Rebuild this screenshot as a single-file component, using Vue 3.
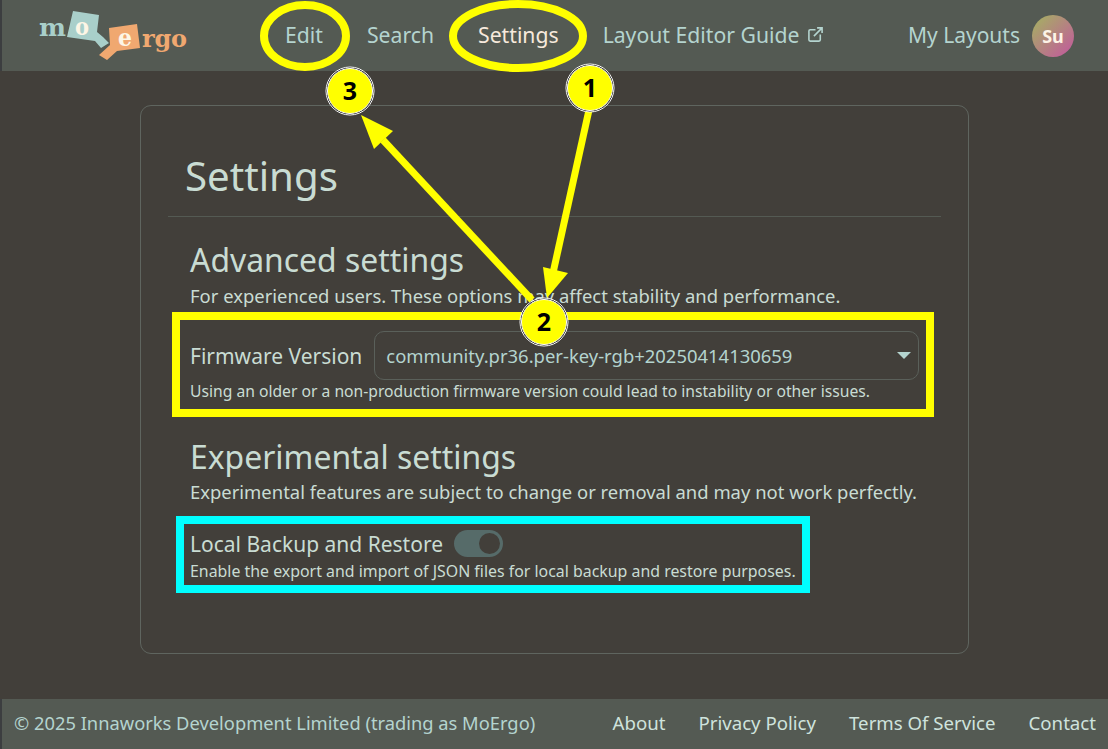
<template>
  <div class="page">
    <header class="topbar">
      <svg class="logo" width="165" height="60" viewBox="0 0 165 60">
        <path fill="#a9cfca" d="M43 6 L69 10 L67 27 L73 32 L79 38 L71 43 L65 36 L37 32 Z" />
        <path fill="#f0a870" d="M79 23 L107 19 L110 43 L87 46 L77 55 L69 50 L80 40 Z" />
        <text class="lt" x="9" y="31" fill="#a9cfca" font-size="24" textLength="27" lengthAdjust="spacingAndGlyphs">m</text>
        <text class="lt" x="45" y="30" fill="#fdf6e6" font-size="24" textLength="14" lengthAdjust="spacingAndGlyphs">o</text>
        <text class="lt" x="88" y="41" fill="#fdf6e6" font-size="24" textLength="14" lengthAdjust="spacingAndGlyphs">e</text>
        <text class="lt" x="112" y="42" fill="#f0a870" font-size="24" textLength="45" lengthAdjust="spacing">rgo</text>
      </svg>
      <nav class="nav">
        <a class="link">Edit</a>
        <a class="link">Search</a>
        <a class="link active">Settings</a>
        <a class="link guide">Layout Editor Guide
          <svg width="17" height="17" viewBox="0 0 16 16" fill="none" stroke="currentColor" stroke-width="1.5">
            <path d="M8 3.500H3A1.200 1.200 0 0 0 1.800 4.700V13A1.200 1.200 0 0 0 3 14.200H11.300A1.200 1.200 0 0 0 12.500 13V8" />
            <path d="M6.500 9.500L14.200 1.800M9.500 1.800H14.200V6.500" />
          </svg>
        </a>
      </nav>
      <div class="user">
        <span class="link mine">My Layouts</span>
        <span class="avatar">Su</span>
      </div>
    </header>

    <main class="main">
      <section class="card">
        <h1 class="title">Settings</h1>
        <div class="body">
          <h2 class="heading">Advanced settings</h2>
          <p class="lead">For experienced users. These options may affect stability and performance.</p>
          <div class="field firmware">
            <div class="row">
              <label class="label">Firmware Version</label>
              <div class="select">
                <span>community.pr36.per-key-rgb+20250414130659</span>
                <i class="caret"></i>
              </div>
            </div>
            <p class="hint">Using an older or a non-production firmware version could lead to instability or other issues.</p>
          </div>
          <h2 class="heading second">Experimental settings</h2>
          <p class="lead">Experimental features are subject to change or removal and may not work perfectly.</p>
          <div class="field backup">
            <div class="row tight">
              <label class="label small">Local Backup and Restore</label>
              <span class="toggle"><i class="knob"></i></span>
            </div>
            <p class="hint low">Enable the export and import of JSON files for local backup and restore purposes.</p>
          </div>
        </div>
      </section>
    </main>

    <footer class="footer">
      <span class="copy">© 2025 Innaworks Development Limited (trading as MoErgo)</span>
      <div class="flinks">
        <a>About</a><a>Privacy Policy</a><a>Terms Of Service</a><a>Contact</a>
      </div>
    </footer>

    <svg class="marks" width="1108" height="749" viewBox="0 0 1108 749">
      <ellipse cx="305" cy="36" rx="41" ry="31" class="ring" />
      <ellipse cx="518" cy="36" rx="65" ry="32" class="ring" />
      <rect x="176" y="316" width="754" height="97" class="box y" />
      <rect x="180" y="520" width="626" height="69" class="box c" />
      <path d="M589 110 L553 273" class="ar" />
      <path d="M532 300 L383 140" class="ar" />
      <path d="M547 298 L543 267 L568 273 Z" class="head" />
      <path d="M361 115 L393 131 L374 149 Z" class="head" />
      <g v-for="b in badges" :key="b.n">
        <circle :cx="b.x" :cy="b.y" r="24" class="b1" />
        <circle :cx="b.x" :cy="b.y" r="22.500" class="b2" />
        <text :x="b.x" :y="b.y + 9" class="num">{{ b.n }}</text>
      </g>
    </svg>
  </div>
</template>

<script setup>
const badges = [
  { n: 1, x: 590, y: 88 },
  { n: 2, x: 544, y: 322 },
  { n: 3, x: 350, y: 91 },
]
</script>

<style>
html, body { margin: 0; background: #423f3a; }
</style>

<style scoped>
.page {
  position: relative;
  width: 1108px;
  height: 749px;
  overflow: hidden;
  display: flex;
  flex-direction: column;
  background: #423f3a;
  color: #c9dcd3;
  font-family: "Noto Sans", "Open Sans", sans-serif;
}
.topbar {
  height: 71px;
  flex: none;
  display: flex;
  align-items: center;
  background: #545a53;
  border-left: 2px solid #3c3e40;
  box-sizing: border-box;
  padding-left: 28px;
}
.logo { flex: none; margin-top: -1px; }
.lt { font-family: "DejaVu Serif", serif; font-weight: 700; }
.nav {
  display: flex;
  gap: 44px;
  margin-left: 90px;
  margin-top: -2px;
  align-items: center;
}
.link {
  color: #b4d4cf;
  font-size: 21.200px;
  white-space: nowrap;
}
.mine { font-size: 21px; margin-top: -2px; }
.active { color: #f7e9dc; }
.guide { display: flex; align-items: center; gap: 8px; }
.user {
  display: flex;
  align-items: center;
  gap: 12px;
  margin-left: auto;
  margin-right: 34px;
}
.avatar {
  width: 42px;
  height: 42px;
  border-radius: 50%;
  background: linear-gradient(135deg, #a3b55f, #c4569f);
  color: #fdf3e6;
  display: flex;
  align-items: center;
  justify-content: center;
  font-weight: 700;
  font-size: 18px;
}
.main { flex: 1; padding: 34px 139px 45px 140px; box-sizing: border-box; min-height: 0; }
.card {
  height: 549px;
  box-sizing: border-box;
  border: 1px solid #5f655f;
  border-radius: 11px;
  padding: 0 27px;
}
.title {
  margin: 0;
  height: 111px;
  box-sizing: border-box;
  padding: 43px 0 0 17px;
  border-bottom: 1px solid #545a53;
  font-size: 40.200px;
  line-height: 54px;
  font-weight: 400;
}
.body { padding: 23px 0 0 22px; }
.heading {
  margin: 0;
  font-size: 31.900px;
  line-height: 40px;
  font-weight: 400;
}
.second { margin-top: 34px; margin-bottom: -1px; }
.lead { margin: 0; font-size: 18.450px; line-height: 31px; height: 31px; white-space: nowrap; }
.field { margin-top: 20px; }
.row { display: flex; align-items: center; gap: 12px; }
.label { font-size: 21px; white-space: nowrap; }
.label.small { font-size: 21px; }
.select {
  width: 545px;
  height: 49px;
  box-sizing: border-box;
  border: 1px solid #5a605a;
  border-radius: 10px;
  padding: 0 7px 0 11px;
  display: flex;
  align-items: center;
  justify-content: space-between;
  color: #b4d4cf;
  font-size: 18.450px;
}
.caret {
  width: 0;
  height: 0;
  border-left: 7px solid transparent;
  border-right: 7px solid transparent;
  border-top: 7px solid #b4d4cf;
}
.hint { margin: 0; font-size: 15.680px; line-height: 23px; white-space: nowrap; }
.hint.low { margin-top: 3px; font-size: 15.900px; }
.backup { margin-top: 23px; }
.tight { gap: 11px; height: 27px; }
.toggle {
  width: 49px;
  height: 27px;
  border-radius: 14px;
  background: #566b69;
  display: flex;
  align-items: center;
  justify-content: flex-end;
  padding-right: 3px;
  box-sizing: border-box;
}
.knob { width: 21px; height: 21px; border-radius: 50%; background: #423f3a; }
.footer {
  height: 50px;
  flex: none;
  box-sizing: border-box;
  background: #545a53;
  border-left: 2px solid #3c3e40;
  display: flex;
  align-items: center;
  justify-content: space-between;
  padding: 0 12px 4px;
  font-size: 18.320px;
  color: #b4d4cf;
}
.copy { white-space: nowrap; }
.flinks { display: flex; gap: 33px; color: #cfe3dd; white-space: nowrap; font-size: 18.650px; }
.marks { position: absolute; left: 0; top: 0; pointer-events: none; }
.ring { fill: none; stroke: #ffff00; stroke-width: 8; }
.box { fill: none; stroke-width: 8; }
.box.y { stroke: #ffff00; }
.box.c { stroke: #00ffff; }
.ar { stroke: #ffff00; stroke-width: 7; fill: none; }
.head { fill: #ffff00; }
.b1 { fill: #000; stroke: #fff; stroke-width: 1; }
.b2 { fill: #ffff00; stroke: #fff; stroke-width: 1; }
.num { font-family: "Noto Sans", sans-serif; font-weight: 700; font-size: 25px; text-anchor: middle; fill: #000; }
</style>
